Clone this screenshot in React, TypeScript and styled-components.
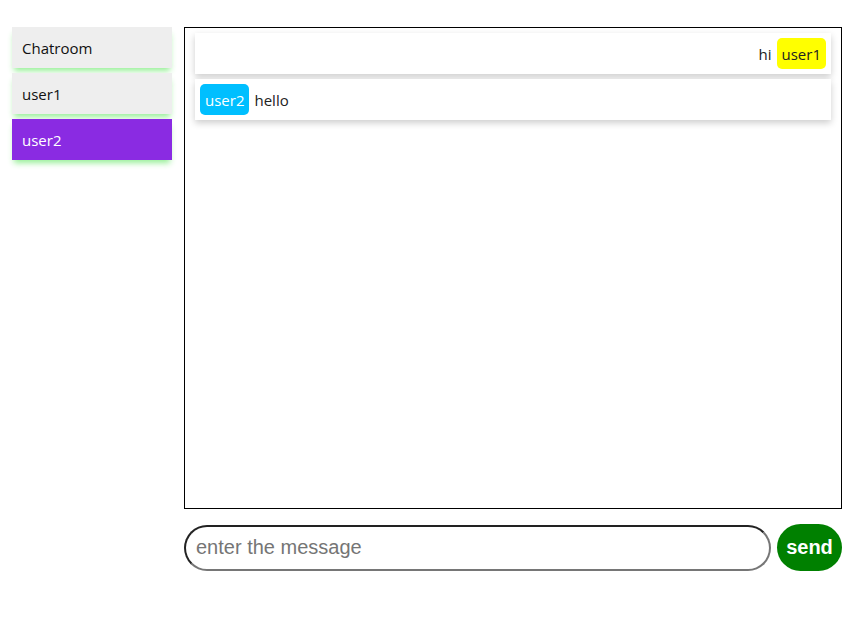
import React from "react";
import styled, { createGlobalStyle } from "styled-components";

const Global = createGlobalStyle`
  html, body { margin: 0; padding: 0; background: #fff; }
  body { font-family: "Open Sans", "Noto Sans", sans-serif; }
`;

const Page = styled.div`
  display: flex;
  gap: 12px;
  padding: 27px 7px 0 12px;
`;

const Sidebar = styled.div`
  width: 160px;
  display: flex;
  flex-direction: column;
  gap: 5px;
`;

const NavItem = styled.div<{ $active?: boolean }>`
  height: 41px;
  display: flex;
  align-items: center;
  padding-left: 10px;
  font-size: 15px;
  color: ${(p) => (p.$active ? "#fff" : "#111")};
  background: ${(p) => (p.$active ? "#8a2be2" : "#eeeeee")};
  box-shadow: 0 5px 6px -2px rgba(144, 238, 144, 0.95);
`;

const Main = styled.div`
  flex: 1;
  display: flex;
  flex-direction: column;
  gap: 15px;
`;

const ChatBox = styled.div`
  height: 482px;
  border: 1px solid #000;
  box-sizing: border-box;
  padding: 5px 10px;
  display: flex;
  flex-direction: column;
  gap: 5px;
`;

const Row = styled.div<{ $mine?: boolean }>`
  height: 41px;
  box-sizing: border-box;
  display: flex;
  align-items: center;
  justify-content: ${(p) => (p.$mine ? "flex-end" : "flex-start")};
  gap: 5px;
  padding: 0 5px;
  background: #fff;
  box-shadow: 0 3px 7px rgba(0, 0, 0, 0.2);
  font-size: 15px;
  color: #222;
`;

const Badge = styled.span<{ $bg: string; $fg: string }>`
  display: inline-flex;
  align-items: center;
  height: 31px;
  padding: 0 5px;
  border-radius: 5px;
  background: ${(p) => p.$bg};
  color: ${(p) => p.$fg};
  font-size: 15px;
`;

const InputBar = styled.div`
  display: flex;
  align-items: center;
  gap: 6px;
`;

const Input = styled.input`
  flex: 1;
  height: 46px;
  box-sizing: border-box;
  border-radius: 23px;
  border: 2px solid;
  border-color: #222 #767676 #767676 #222;
  padding: 0 10px;
  font-family: "Liberation Sans", Arial, sans-serif;
  font-size: 20px;
  outline: none;
  &::placeholder { color: #757575; }
`;

const SendButton = styled.button`
  width: 65px;
  height: 47px;
  border: none;
  border-radius: 24px;
  background: #008000;
  color: #fff;
  font-family: "Liberation Sans", Arial, sans-serif;
  font-weight: bold;
  font-size: 20px;
  padding: 0;
`;

export default function App() {
  return (
    <>
      <Global />
      <Page>
        <Sidebar>
          <NavItem>Chatroom</NavItem>
          <NavItem>user1</NavItem>
          <NavItem $active>user2</NavItem>
        </Sidebar>
        <Main>
          <ChatBox>
            <Row $mine>
              <span>hi</span>
              <Badge $bg="#ffff00" $fg="#222">user1</Badge>
            </Row>
            <Row>
              <Badge $bg="#00bfff" $fg="#fff">user2</Badge>
              <span>hello</span>
            </Row>
          </ChatBox>
          <InputBar>
            <Input placeholder="enter the message" />
            <SendButton>send</SendButton>
          </InputBar>
        </Main>
      </Page>
    </>
  );
}
